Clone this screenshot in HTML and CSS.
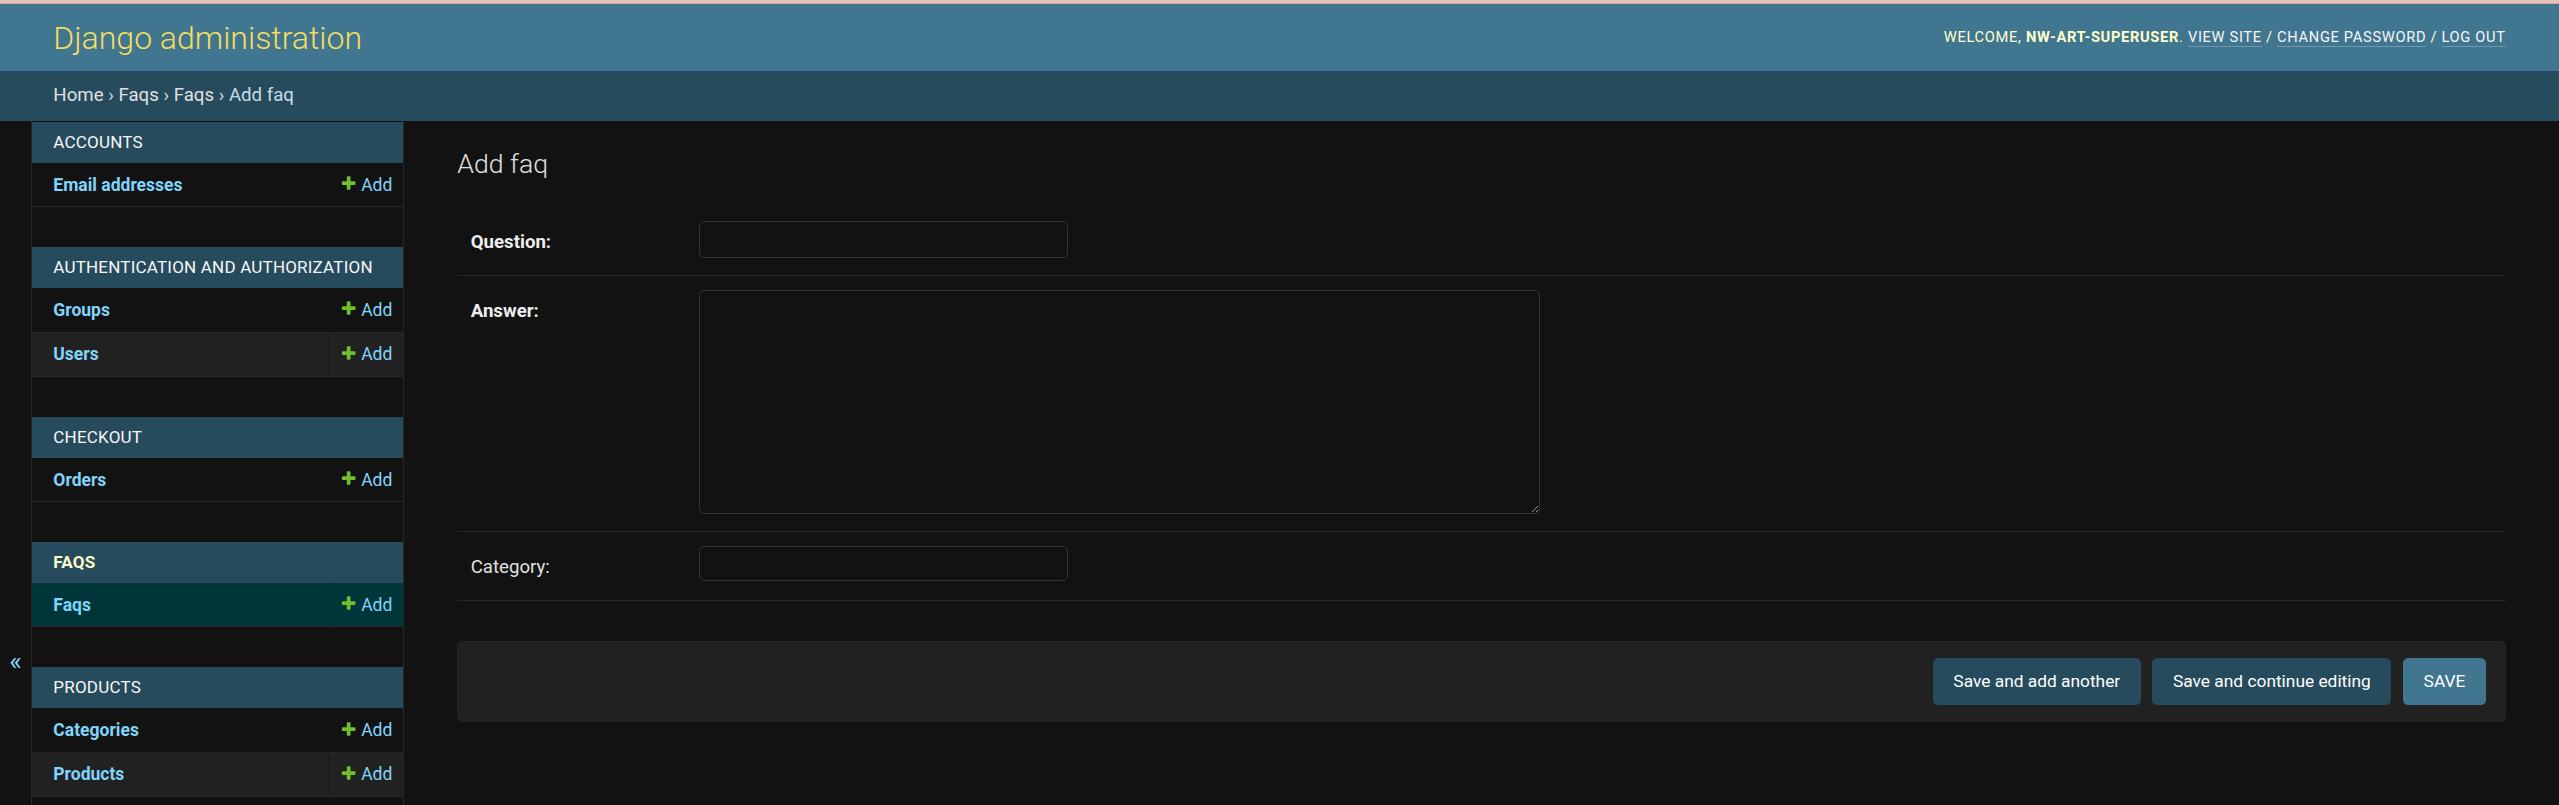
FILE: index.html
```html
<!DOCTYPE html>
<html lang="en">
<head>
<meta charset="utf-8">
<title>Add faq | Django site admin</title>
<link rel="stylesheet" href="styles.css">
</head>
<body>
<div class="topline"></div>
<header class="header">
  <h1 class="site-name"><a href="#">Django administration</a></h1>
  <div class="user-tools">WELCOME, <strong>NW-ART-SUPERUSER</strong>. <a href="#">VIEW SITE</a> / <a href="#">CHANGE PASSWORD</a> / <a href="#">LOG OUT</a></div>
</header>
<nav class="breadcrumbs"><a href="#">Home</a> › <a href="#">Faqs</a> › <a href="#">Faqs</a> › Add faq</nav>
<div class="main">
  <button class="toggle-nav" type="button">«</button>
  <nav class="sidebar">
    <div class="module">
      <div class="caption"><a href="#">ACCOUNTS</a></div>
      <div class="row"><a class="model" href="#">Email addresses</a><a class="addlink" href="#"><svg class="plus" viewBox="0 0 1792 1792"><path d="M1600 736v192q0 40-28 68t-68 28h-416v416q0 40-28 68t-68 28h-192q-40 0-68-28t-28-68v-416h-416q-40 0-68-28t-28-68v-192q0-40 28-68t68-28h416v-416q0-40 28-68t68-28h192q40 0 68 28t28 68v416h416q40 0 68 28t28 68z"/></svg>Add</a></div>
    </div>
    <div class="module">
      <div class="caption"><a href="#">AUTHENTICATION AND AUTHORIZATION</a></div>
      <div class="row"><a class="model" href="#">Groups</a><a class="addlink" href="#"><svg class="plus" viewBox="0 0 1792 1792"><path d="M1600 736v192q0 40-28 68t-68 28h-416v416q0 40-28 68t-68 28h-192q-40 0-68-28t-28-68v-416h-416q-40 0-68-28t-28-68v-192q0-40 28-68t68-28h416v-416q0-40 28-68t68-28h192q40 0 68 28t28 68v416h416q40 0 68 28t28 68z"/></svg>Add</a></div>
      <div class="row alt"><a class="model" href="#">Users</a><a class="addlink" href="#"><svg class="plus" viewBox="0 0 1792 1792"><path d="M1600 736v192q0 40-28 68t-68 28h-416v416q0 40-28 68t-68 28h-192q-40 0-68-28t-28-68v-416h-416q-40 0-68-28t-28-68v-192q0-40 28-68t68-28h416v-416q0-40 28-68t68-28h192q40 0 68 28t28 68v416h416q40 0 68 28t28 68z"/></svg>Add</a></div>
    </div>
    <div class="module">
      <div class="caption"><a href="#">CHECKOUT</a></div>
      <div class="row"><a class="model" href="#">Orders</a><a class="addlink" href="#"><svg class="plus" viewBox="0 0 1792 1792"><path d="M1600 736v192q0 40-28 68t-68 28h-416v416q0 40-28 68t-68 28h-192q-40 0-68-28t-28-68v-416h-416q-40 0-68-28t-28-68v-192q0-40 28-68t68-28h416v-416q0-40 28-68t68-28h192q40 0 68 28t28 68v416h416q40 0 68 28t28 68z"/></svg>Add</a></div>
    </div>
    <div class="module">
      <div class="caption current"><a href="#">FAQS</a></div>
      <div class="row selected"><a class="model" href="#">Faqs</a><a class="addlink" href="#"><svg class="plus" viewBox="0 0 1792 1792"><path d="M1600 736v192q0 40-28 68t-68 28h-416v416q0 40-28 68t-68 28h-192q-40 0-68-28t-28-68v-416h-416q-40 0-68-28t-28-68v-192q0-40 28-68t68-28h416v-416q0-40 28-68t68-28h192q40 0 68 28t28 68v416h416q40 0 68 28t28 68z"/></svg>Add</a></div>
    </div>
    <div class="module">
      <div class="caption"><a href="#">PRODUCTS</a></div>
      <div class="row"><a class="model" href="#">Categories</a><a class="addlink" href="#"><svg class="plus" viewBox="0 0 1792 1792"><path d="M1600 736v192q0 40-28 68t-68 28h-416v416q0 40-28 68t-68 28h-192q-40 0-68-28t-28-68v-416h-416q-40 0-68-28t-28-68v-192q0-40 28-68t68-28h416v-416q0-40 28-68t68-28h192q40 0 68 28t28 68v416h416q40 0 68 28t28 68z"/></svg>Add</a></div>
      <div class="row alt"><a class="model" href="#">Products</a><a class="addlink" href="#"><svg class="plus" viewBox="0 0 1792 1792"><path d="M1600 736v192q0 40-28 68t-68 28h-416v416q0 40-28 68t-68 28h-192q-40 0-68-28t-28-68v-416h-416q-40 0-68-28t-28-68v-192q0-40 28-68t68-28h416v-416q0-40 28-68t68-28h192q40 0 68 28t28 68v416h416q40 0 68 28t28 68z"/></svg>Add</a></div>
    </div>
  </nav>
  <main class="content">
    <h1 class="page-title">Add faq</h1>
    <form class="form">
      <fieldset class="fieldset">
        <div class="form-row">
          <label class="label required" for="id_question">Question:</label>
          <input class="input" type="text" id="id_question">
        </div>
        <div class="form-row">
          <label class="label required" for="id_answer">Answer:</label>
          <textarea class="input textarea" id="id_answer"></textarea>
        </div>
        <div class="form-row">
          <label class="label" for="id_category">Category:</label>
          <input class="input short" type="text" id="id_category">
        </div>
      </fieldset>
      <div class="submit-row">
        <input class="btn" type="submit" value="Save and add another">
        <input class="btn" type="submit" value="Save and continue editing">
        <input class="btn default" type="submit" value="SAVE">
      </div>
    </form>
  </main>
</div>
</body>
</html>
```
FILE: styles.css
```css
* { box-sizing: border-box; }
html, body { margin: 0; padding: 0; }
body {
  background: #121212;
  color: #eeeeee;
  font-family: Roboto, "Liberation Sans", sans-serif;
  font-size: 18.67px;
}
a { text-decoration: none; }

.topline {
  height: 4px;
  background: #e9c2ba;
  border-bottom: 1px solid #c9aca7;
}

.header {
  display: flex;
  justify-content: space-between;
  align-items: center;
  height: 67px;
  padding: 0 53.33px;
  background: #417690;
}
.site-name {
  margin: 0;
  font-size: 32px;
  font-weight: 300;
  line-height: 40px;
}
.site-name a { color: #f5dd5d; }
.user-tools {
  font-size: 14.67px;
  letter-spacing: 0.67px;
  color: #ffffcc;
  line-height: 1.2;
}
.user-tools strong { font-weight: 700; }
.user-tools a {
  color: #f7f7f7;
  border-bottom: 1px solid rgba(255, 255, 255, 0.25);
}

.breadcrumbs {
  background: #264b5d;
  padding: 13.33px 53.33px;
  line-height: 23.33px;
  font-size: 18.67px;
  color: #c4dce8;
}
.breadcrumbs a { color: #e0e0e0; }

.main {
  display: flex;
  align-items: stretch;
}

.toggle-nav {
  flex: 0 0 32px;
  width: 32px;
  border: 0;
  border-right: 1px solid #272727;
  background: #121212;
  color: #81d4fa;
  font-family: Roboto, "Liberation Sans", sans-serif;
  font-size: 26.67px;
  line-height: 32px;
  padding: 524px 0 0;
  display: flex;
  justify-content: center;
  align-items: flex-start;
}

.sidebar {
  flex: 0 0 372px;
  border-right: 1px solid #272727;
  border-top: 1px solid transparent;
}
.module { margin-bottom: 40px; }
.caption {
  background: #264b5d;
  padding: 10.67px 21.33px;
  line-height: 19.67px;
  font-size: 17px;
  letter-spacing: 0.2px;
  white-space: nowrap;
  overflow: hidden;
}
.caption a { color: #f7f7f7; }
.caption.current a { color: #ffffcc; font-weight: 700; }

.row {
  display: flex;
  border-bottom: 1px solid #272727;
  font-size: 17.5px;
  line-height: 22px;
}
.row.alt { background: #212121; }
.row.selected { background: #00363a; }
.model {
  flex: 1;
  padding: 10.67px 21.33px;
  font-weight: 700;
  color: #81d4fa;
}
.addlink {
  padding: 10.67px;
  color: #81d4fa;
  border-left: 1px solid transparent;
  white-space: nowrap;
}
.row.alt .addlink { border-left-color: #1a1a1a; }
.row.selected .addlink { border-left-color: #002f32; }
.plus {
  display: inline-block;
  vertical-align: top;
  width: 17.33px;
  height: 17.33px;
  margin-top: 1.5px;
  margin-right: 4px;
  fill: #70bf2b;
}

.content {
  flex: 1;
  min-width: 0;
  padding: 26.67px 53.33px;
}
.page-title {
  margin: 0 0 27px;
  font-size: 26.67px;
  font-weight: 300;
  line-height: 32px;
  color: #e0e0e0;
}
.fieldset {
  border: 0;
  margin: 0;
  padding: 0;
  min-width: 0;
}
.form-row {
  display: flex;
  align-items: flex-start;
  padding: 14px 13.33px 17px;
  border-bottom: 1px solid #272727;
}
.label {
  flex: 0 0 228px;
  padding-top: 10.67px;
  line-height: 22px;
  font-size: 18.67px;
  color: #e0e0e0;
}
.label.required {
  font-weight: 700;
  color: #eeeeee;
}
.input {
  display: block;
  width: 369px;
  height: 37px;
  margin: 0;
  background: #121212;
  border: 1px solid #353535;
  border-radius: 5.33px;
  padding: 6.67px 8px;
  color: #eeeeee;
  font-family: inherit;
  font-size: 18.67px;
  color-scheme: dark;
}
.textarea {
  width: 841px;
  height: 224px;
  resize: both;
}
.input.short {
  height: 35px;
  margin-bottom: 2px;
}

.submit-row {
  margin-top: 40.5px;
  display: flex;
  justify-content: flex-end;
  gap: 11.5px;
  padding: 16px 18.67px;
  background: #212121;
  border: 1px solid #272727;
  border-radius: 5.33px;
}
.btn {
  height: 46.67px;
  margin: 0;
  padding: 13.33px 20.67px;
  line-height: 20px;
  border: 0;
  border-radius: 5.33px;
  background: #264b5d;
  color: #ffffff;
  font-family: Roboto, "Liberation Sans", sans-serif;
  font-size: 17.33px;
}
.btn.default { background: #417690; }
```
